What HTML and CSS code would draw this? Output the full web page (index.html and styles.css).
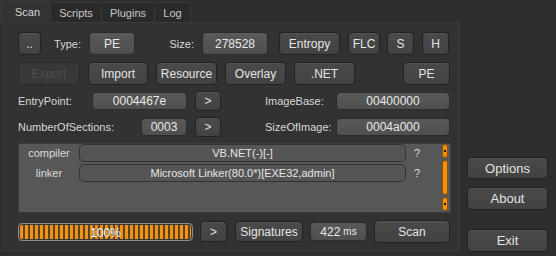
FILE: index.html
```html
<!DOCTYPE html>
<html lang="en">
<head>
    <meta charset="UTF-8">
    <title>Detect It Easy</title>
    <link rel="stylesheet" href="styles.css">
</head>
<body>
    <div class="app">
        <div class="main">
            <div class="tabbar">
                <div class="tab active">Scan</div>
                <div class="tab">Scripts</div>
                <div class="tab">Plugins</div>
                <div class="tab">Log</div>
            </div>

            <div class="pane">
                <div class="row r-top">
                    <button class="btn w-dots">..</button>
                    <span class="lbl lbl-type">Type:</span>
                    <div class="field w-type">PE</div>
                    <span class="lbl lbl-size">Size:</span>
                    <div class="field w-size">278528</div>
                    <button class="btn w-entropy">Entropy</button>
                    <button class="btn w-flc">FLC</button>
                    <button class="btn w-s">S</button>
                    <button class="btn w-h">H</button>
                </div>

                <div class="row r-top">
                    <button class="btn w-62" disabled>Export</button>
                    <button class="btn w-60">Import</button>
                    <button class="btn w-61">Resource</button>
                    <button class="btn w-61">Overlay</button>
                    <button class="btn w-61">.NET</button>
                    <span class="spacer"></span>
                    <button class="btn w-pe">PE</button>
                </div>

                <div class="row r-info">
                    <span class="lbl lbl-entry">EntryPoint:</span>
                    <div class="field w-entry">0004467e</div>
                    <button class="btn w-go">&gt;</button>
                    <span class="lbl lbl-right">ImageBase:</span>
                    <div class="field grow">00400000</div>
                </div>

                <div class="row r-info r-sections">
                    <span class="lbl lbl-sections">NumberOfSections:</span>
                    <div class="field w-sections">0003</div>
                    <button class="btn w-go">&gt;</button>
                    <span class="lbl lbl-right">SizeOfImage:</span>
                    <div class="field grow">0004a000</div>
                </div>

                <div class="results">
                    <div class="result-rows">
                        <div class="result">
                            <span class="res-type">compiler</span>
                            <div class="res-name">VB.NET(-)[-]</div>
                            <span class="res-info">?</span>
                        </div>
                        <div class="result">
                            <span class="res-type">linker</span>
                            <div class="res-name">Microsoft Linker(80.0*)[EXE32,admin]</div>
                            <span class="res-info">?</span>
                        </div>
                    </div>
                    <div class="scrollbar">
                        <div class="sb-arrow"><i></i></div>
                        <div class="sb-handle"></div>
                        <div class="sb-arrow"><i></i></div>
                    </div>
                </div>

                <div class="row r-bottom">
                    <div class="progress">
                        <div class="progress-fill"></div>
                        <span class="progress-text">100%</span>
                    </div>
                    <button class="btn w-more">&gt;</button>
                    <button class="btn w-sig">Signatures</button>
                    <div class="field w-time">422 <small>ms</small></div>
                    <button class="btn w-scan">Scan</button>
                </div>
            </div>
        </div>

        <div class="side">
            <button class="btn side-btn">Options</button>
            <button class="btn side-btn">About</button>
            <button class="btn side-btn exit">Exit</button>
        </div>
    </div>
</body>
</html>
```

FILE: styles.css
```css
* {
    box-sizing: border-box;
}

body {
    margin: 0;
    background: #2e2e2e;
    font-family: "Liberation Sans", Arial, sans-serif;
    font-size: 12px;
    color: #dedede;
}

.app {
    display: flex;
    height: 256px;
    width: 556px;
}

.main {
    width: 460px;
    display: flex;
    flex-direction: column;
}

/* Tabs */
.tabbar {
    display: flex;
    align-items: flex-end;
    height: 22px;
}

.tab {
    height: 20px;
    padding: 0 8px;
    background: #2a2a2a;
    border: 1px solid #3a3a3a;
    border-bottom: none;
    border-left: none;
    border-radius: 3px 3px 0 0;
    font-size: 11px;
    color: #c8c8c8;
    display: flex;
    align-items: center;
    justify-content: center;
}

.tab:nth-child(2) { width: 51px; }
.tab:nth-child(3) { width: 53px; }
.tab:nth-child(4) { width: 36px; }

.tab.active {
    width: 51px;
    height: 23px;
    margin-bottom: -1px;
    background: #333333;
    border-left: 1px solid #3a3a3a;
    color: #d6d6d6;
    position: relative;
    z-index: 1;
    padding-left: 12px;
}

/* Pane */
.pane {
    height: 229px;
    background: #323232;
    border: 1px solid #3b3b3b;
    border-left-color: #2b2b2b;
    padding: 9px 9px 0 17px;
    display: flex;
    flex-direction: column;
    gap: 7px;
}

.row {
    display: flex;
    align-items: center;
    gap: 8px;
}

.r-top { height: 23px; }
.r-info { height: 18px; }
.r-sections { margin-top: 1px; }
.r-bottom { height: 23px; gap: 7px; }

.spacer { flex: 1; }

/* Buttons */
.btn {
    height: 23px;
    padding: 0;
    font: inherit;
    color: #e4e4e4;
    background: linear-gradient(#4a4a4a, #424242);
    border: 1px solid #222222;
    border-radius: 4px;
    box-shadow: inset 0 1px 0 rgba(255, 255, 255, 0.05);
    cursor: pointer;
}

.btn:disabled {
    background: #383838;
    border-color: #2a2a2a;
    color: #4e4e4e;
    box-shadow: none;
}

.w-dots { width: 23px; }
.w-entropy { width: 61px; margin-left: 3px; }
.w-flc { width: 32px; }
.w-s { width: 27px; margin-left: -1px; }
.w-h { width: 27px; }
.w-60 { width: 60px; }
.w-61 { width: 61px; }
.w-62 { width: 62px; }
.w-pe { width: 47px; }
.w-go { width: 26px; height: 20px; }
.w-more { width: 27px; height: 21px; }
.w-sig { width: 68px; height: 21px; margin-left: 1px; }
.w-scan { width: 76px; }

/* Fields */
.field {
    height: 100%;
    background: linear-gradient(#595959, #4f4f4f);
    border: 1px solid #2b2b2b;
    border-radius: 4px;
    display: flex;
    align-items: center;
    justify-content: center;
    color: #e8e8e8;
}

.w-type { width: 46px; }
.w-size { width: 66px; }
.w-entry { width: 95px; }
.w-sections { width: 46px; }
.w-time { width: 57px; height: 19px; gap: 3px; }
.w-time small { font-size: 10px; }
.grow { flex: 1; }

/* Labels */
.lbl {
    font-size: 11px;
    color: #d8d8d8;
}

.lbl-type { width: 32px; text-align: right; }
.lbl-size { width: 51px; text-align: right; }
.lbl-entry { width: 66px; }
.lbl-sections { width: 115px; }
.lbl-right { width: 99px; padding-left: 36px; }

/* Results list */
.results {
    height: 70px;
    margin-right: -1px;
    background: #575757;
    border: 1px solid #3c3c3c;
    display: flex;
}

.result-rows {
    flex: 1;
    display: flex;
    flex-direction: column;
    gap: 2px;
}

.result {
    display: flex;
    align-items: center;
    height: 18px;
}

.res-type {
    width: 60px;
    text-align: center;
    font-size: 11px;
    color: #dcdcdc;
}

.res-name {
    width: 327px;
    height: 18px;
    border: 1px solid #333333;
    border-radius: 5px;
    background: #555555;
    display: flex;
    align-items: center;
    justify-content: center;
    font-size: 11px;
    color: #e6e6e6;
}

.res-info {
    margin-left: 8px;
    font-size: 11px;
    color: #dcdcdc;
}

.scrollbar {
    width: 6px;
    margin: 0 2px 1px 0;
    display: flex;
    flex-direction: column;
    gap: 2px;
}

.sb-arrow,
.sb-handle {
    background: #f0900e;
    border: 1px solid #8a4f00;
    border-radius: 3px;
}

.sb-arrow {
    height: 14px;
    display: flex;
    align-items: center;
    justify-content: center;
}

.sb-arrow i {
    width: 2px;
    height: 2px;
    background: #111;
}

.sb-handle {
    height: 35px;
}

/* Progress */
.progress {
    width: 175px;
    height: 18px;
    border: 1px solid #8a8a8a;
    border-radius: 4px;
    padding: 1px;
    background: #3a3a3a;
    position: relative;
}

.progress-fill {
    height: 100%;
    border-radius: 2px;
    background: repeating-linear-gradient(90deg, #f09418 0, #f09418 3px, #5c4220 3px, #5c4220 5px);
}

.progress-text {
    position: absolute;
    left: 0;
    right: 0;
    top: 2px;
    text-align: center;
    color: #ffffff;
    text-shadow: 0 0 2px #555;
}

/* Side buttons */
.side {
    width: 81px;
    margin-left: 7px;
    padding-bottom: 4px;
    display: flex;
    flex-direction: column;
    justify-content: flex-end;
    gap: 8px;
}

.side-btn {
    width: 81px;
    font-size: 13px;
}

.side-btn:first-child {
    height: 22px;
}

.exit {
    margin-top: 11px;
}
```
